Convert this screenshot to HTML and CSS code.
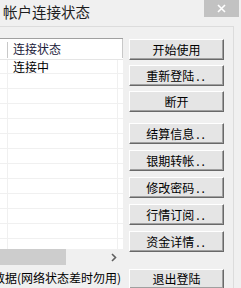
FILE: index.html
```html
<!DOCTYPE html>
<html lang="zh-CN">
<head>
  <meta charset="UTF-8">
  <title>帐户连接状态</title>
  <link rel="stylesheet" href="styles.css">
</head>
<body>
  <div class="titlebar">
    <span class="title">帐户连接状态</span>
    <button class="close-btn" aria-label="关闭">
      <svg width="9" height="9" viewBox="0 0 9 9"><path d="M1 1L8 8M8 1L1 8" stroke="#fff" stroke-width="1.6"/></svg>
    </button>
  </div>
  <div class="panel">
    <div class="left">
      <div class="list">
        <div class="list-head">
          <div class="col-gap"></div>
          <div class="col-status">连接状态</div>
        </div>
        <div class="list-body">
          <div class="row">连接中</div>
        </div>
        <div class="hscroll">
          <div class="thumb"></div>
          <svg class="arrow" width="6" height="9" viewBox="0 0 6 9"><path d="M1 1L4.5 4.5L1 8" fill="none" stroke="#606060" stroke-width="1.6"/></svg>
        </div>
      </div>
      <div class="note"><span class="note-text">数据(网络状态差时勿用)</span></div>
    </div>
    <div class="buttons">
      <div class="group">
        <button class="btn">开始使用</button>
        <button class="btn">重新登陆<span class="dots">..</span></button>
        <button class="btn">断开</button>
      </div>
      <div class="group second">
        <button class="btn">结算信息<span class="dots">..</span></button>
        <button class="btn">银期转帐<span class="dots">..</span></button>
        <button class="btn">修改密码<span class="dots">..</span></button>
        <button class="btn">行情订阅<span class="dots">..</span></button>
        <button class="btn">资金详情<span class="dots">..</span></button>
      </div>
      <button class="btn last">退出登陆</button>
    </div>
  </div>
</body>
</html>
```

FILE: styles.css
```css
body { margin: 0; background: #f0f0f0; font-family: "Noto Sans CJK SC", "Noto Sans", sans-serif; font-size: 12px; color: #000; width: 241px; height: 288px; overflow: hidden;}
.titlebar { height: 26px; display: flex; align-items: flex-start;}
.title { font-size: 14.5px; line-height: 18px; padding: 3px 0 0 3px; color: #1e1e1e;}
.close-btn { margin-left: auto; margin-right: 2px; width: 35px; height: 17px; border: none; background: #c2c2c2; padding: 0; display: flex; align-items: center; justify-content: center;}
.panel { width: 234px; height: 262px; border-top: 1px solid #dcdcdc; border-right: 1px solid #dcdcdc; display: flex; padding-top: 11px; box-sizing: border-box;}
.left { width: 123px; display: flex; flex-direction: column;}
.list { height: 228px; background: #fff; border-top: 1px solid #a0a0a0; display: flex; flex-direction: column;}
.list-head { height: 20px; display: flex; border-bottom: 1px solid #e5e5e5;}
.col-gap { width: 7px; border-right: 1px solid #c8c8c8; margin: 3px 0 1px 0;}
.col-status { width: 109px; padding-left: 5px; border-right: 1px solid #c8c8c8; line-height: 16px; padding-top: 2px; margin-bottom: 1px; color: #20203a;}
.list-body { flex: 1; background:
  linear-gradient(to right, transparent 7px, #f0f0f0 7px 8px, transparent 8px 117px, #f0f0f0 117px 118px, transparent 118px),
  repeating-linear-gradient(to bottom, transparent 0 13px, #f0f0f0 13px 14px, transparent 14px 15px);}
.row { height: 14px; line-height: 14px; padding-left: 13px;}
.hscroll { height: 16px; background: #f0f0f0; display: flex; align-items: center; justify-content: space-between;}
.thumb { width: 66px; height: 16px; background: #cdcdcd;}
.arrow { margin-right: 6px;}
.note { margin-top: 3px; overflow: hidden; white-space: nowrap; line-height: 20px;}
.note-text { margin-left: -7px; display: inline-block;}
.buttons { margin-left: 6px; width: 95px; display: flex; flex-direction: column; padding-top: 1px;}
.group { display: flex; flex-direction: column; gap: 5px;}
.group.second { margin-top: 11px; gap: 6px;}
.btn { height: 21px; width: 95px; padding: 0; font-family: inherit; font-size: 12px; color: #000; background: #e5e5e5; border: 1px solid; border-color: #fff #696969 #696969 #fff; box-shadow: inset -1px -1px #a0a0a0; line-height: 18px;}
.dots { letter-spacing: 2px; margin-left: 2px;}
.btn.last { margin-top: 17px;}
```
